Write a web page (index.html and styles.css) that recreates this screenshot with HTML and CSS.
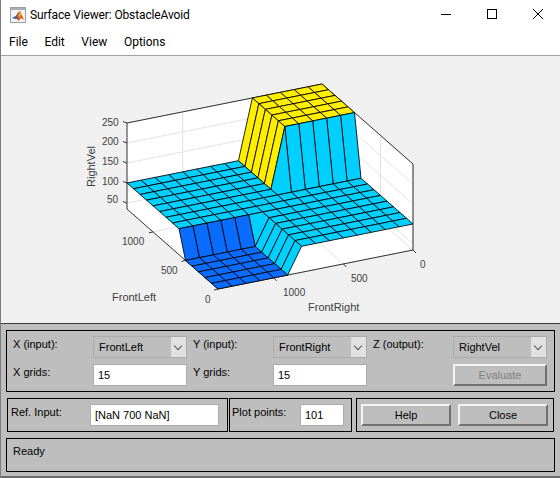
FILE: index.html
```html
<!DOCTYPE html>
<html>
  <head>
    <title>Surface Viewer: ObstacleAvoid</title>
    <meta charset="UTF-8">
    <link rel="stylesheet" href="styles.css">
  </head>
  <body>
    <div class="window">
      <div class="titlebar">
        <svg class="appicon" width="16" height="16" viewBox="0 0 16 16">
          <rect x="0.5" y="0.5" width="15" height="15" fill="#f2f4f6" stroke="#9a9ea4"/>
          <rect x="1" y="1" width="14" height="2" fill="#a8adb4"/>
          <path d="M2 11 L6 9 L8 5.5 L10 4 L14 13 L11 11 L8.5 14 L6 11 Z" fill="#d9541e"/>
          <path d="M2 11 L6 9 L8 6 L7 12 L5 12 Z" fill="#2f6fb5"/>
          <path d="M10 4 L11.5 7.5 L10 11 L8 9 Z" fill="#f0a020"/>
        </svg>
        <span class="title">Surface Viewer: ObstacleAvoid</span>
        <div class="winbtns">
          <svg width="12" height="12" viewBox="0 0 12 12"><path d="M1 6.5H11" stroke="#000" fill="none"/></svg>
          <svg width="12" height="12" viewBox="0 0 12 12"><rect x="1.5" y="1.5" width="9" height="9" stroke="#000" fill="none"/></svg>
          <svg width="12" height="12" viewBox="0 0 12 12"><path d="M1 1L11 11M11 1L1 11" stroke="#000" fill="none"/></svg>
        </div>
      </div>
      <div class="menubar">
        <span>File</span><span>Edit</span><span>View</span><span>Options</span>
      </div>
      <div class="plotarea">
        <svg id="plot" width="559" height="267" viewBox="1 56 559 267">
          <g id="mesh"></g>
          <g class="ticklabels">
            <text x="102" y="126">250</text>
            <text x="102" y="145">200</text>
            <text x="102" y="165">150</text>
            <text x="102" y="185">100</text>
            <text x="107" y="203">50</text>
            <text x="122" y="245">1000</text>
            <text x="161" y="274">500</text>
            <text x="205" y="303">0</text>
            <text x="283" y="296">1000</text>
            <text x="351" y="282">500</text>
            <text x="420" y="268">0</text>
          </g>
          <g class="axislabels">
            <text x="112" y="301">FrontLeft</text>
            <text x="308" y="311">FrontRight</text>
            <text transform="translate(95 187) rotate(-90)">RightVel</text>
          </g>
        </svg>
      </div>
      <div class="controls">
        <div class="panel fields">
          <label>X (input):</label>
          <div class="popup">FrontLeft</div>
          <label>Y (input):</label>
          <div class="popup">FrontRight</div>
          <label>Z (output):</label>
          <div class="popup">RightVel</div>
          <label>X grids:</label>
          <div class="edit">15</div>
          <label>Y grids:</label>
          <div class="edit">15</div>
          <label></label>
          <div class="btn disabled">Evaluate</div>
        </div>
        <div class="row">
          <div class="panel refinput">
            <label>Ref. Input:</label>
            <div class="edit">[NaN 700 NaN]</div>
          </div>
          <div class="panel plotpoints">
            <label>Plot points:</label>
            <div class="edit">101</div>
          </div>
          <div class="panel buttons">
            <div class="btn">Help</div>
            <div class="btn">Close</div>
          </div>
        </div>
        <div class="panel status">Ready</div>
      </div>
    </div>
    <script src="script.js"></script>
  </body>
</html>
```
FILE: styles.css
```css
body {
  margin: 0;
  width: 560px;
  height: 478px;
  overflow: hidden;
  background: #fff;
  font-family: 'Liberation Sans', Arial, sans-serif;
  font-size: 11px;
  color: #000;
}
.window {
  display: flex;
  flex-direction: column;
  height: 478px;
  border-left: 1px solid #7c7c7c;
  box-sizing: border-box;
}
.titlebar {
  display: flex;
  align-items: center;
  height: 30px;
  padding-left: 9px;
  flex: none;
}
.appicon {
  margin-right: 4px;
}
.title {
  font-family: Roboto, sans-serif;
  font-size: 12px;
  letter-spacing: -0.13px;
}
.winbtns {
  display: flex;
  gap: 34px;
  margin-left: auto;
  margin-right: 16px;
  margin-bottom: 2px;
}
.menubar {
  display: flex;
  gap: 16.6px;
  height: 26px;
  padding: 5px 0 0 8px;
  box-sizing: border-box;
  border-bottom: 1px solid #a0a0a0;
  font-family: Roboto, sans-serif;
  font-size: 12px;
  flex: none;
}
.plotarea {
  height: 267px;
  background: #f0f0f0;
  flex: none;
}
#plot {
  display: block;
}
#plot text {
  font-family: 'Liberation Sans', Arial, sans-serif;
  fill: #404040;
}
.ticklabels text {
  font-size: 10px;
}
.axislabels text {
  font-size: 11px;
}
.controls {
  flex: 1;
  display: flex;
  flex-direction: column;
  gap: 6px;
  background: #bebebe;
  border-top: 1px solid #3c3c3c;
  border-bottom: 2px solid #6c6c6c;
  padding: 6px 5px 4px 5px;
}
.panel {
  border: 1px solid #000;
  box-sizing: border-box;
}
.fields {
  display: grid;
  grid-template-columns: 86px 94px 86px 94px 86px 94px;
  grid-auto-rows: 22px;
  row-gap: 6px;
  height: 62px;
  padding-top: 5px;
}
.fields label {
  padding: 2px 0 0 6px;
}
.row {
  display: flex;
  height: 34px;
}
.refinput, .plotpoints {
  display: flex;
  padding-top: 5px;
}
.refinput label, .plotpoints label {
  padding-top: 2px;
}
.refinput {
  width: 221px;
  margin-left: 1px;
  padding-left: 3px;
}
.refinput label {
  width: 79px;
}
.refinput .edit {
  width: 129px;
}
.plotpoints {
  width: 123px;
  margin-left: 1px;
  padding-left: 2px;
}
.plotpoints label {
  width: 68px;
}
.plotpoints .edit {
  width: 44px;
}
.buttons {
  display: flex;
  gap: 7px;
  width: 198px;
  margin-left: 4px;
  padding: 5px 0 0 4px;
}
.buttons .btn {
  width: 90px;
  height: 22px;
}
.status {
  height: 34px;
  padding: 6px 0 0 6px;
}
.popup {
  position: relative;
  height: 22px;
  line-height: 21px;
  padding-left: 5px;
  border: 1px solid #acacac;
  box-sizing: border-box;
}
.popup:after {
  content: "";
  position: absolute;
  right: 0;
  top: 0;
  width: 15px;
  height: 20px;
  background: #e1e1e1;
}
.popup:before {
  content: "";
  position: absolute;
  right: 5px;
  top: 6px;
  width: 5px;
  height: 5px;
  border-right: 1px solid #555;
  border-bottom: 1px solid #555;
  transform: rotate(45deg);
  z-index: 1;
}
.edit {
  height: 22px;
  line-height: 21px;
  padding-left: 4px;
  background: #fff;
  border: 1px solid #acacac;
  box-sizing: border-box;
}
.btn {
  height: 22px;
  line-height: 19px;
  text-align: center;
  background: #bebebe;
  box-sizing: border-box;
  border: 2px solid;
  border-color: #f4f4f4 #707070 #707070 #f4f4f4;
}
.btn.disabled {
  color: #808080;
}
```
FILE: script.js
```js
// draws the surface and its box from the three corner directions on screen
var svg = 'http://www.w3.org/2000/svg';
var mesh = document.getElementById('mesh');
var N = 14;
var BLUE = '#0a6cff', CYAN = '#00d0ff', YELLOW = '#ffee00';

function pt(u, v, h) {
  return [413 - 195 * u - 91 * v, 250 + 39 * u - 80 * v - h];
}
function add(name, attrs) {
  var el = document.createElementNS(svg, name);
  for (var k in attrs) el.setAttribute(k, attrs[k]);
  mesh.appendChild(el);
}
function poly(points, fill, stroke) {
  add('polygon', {
    points: points.map(function (p) { return p.join(','); }).join(' '),
    fill: fill,
    stroke: stroke || 'none',
    'stroke-width': 0.85
  });
}
function line(a, b, color) {
  add('line', { x1: a[0], y1: a[1], x2: b[0], y2: b[1], stroke: color, 'stroke-width': 1 });
}

// heights by grid index, i along FrontRight, j along FrontLeft
function height(i, j) {
  if (i <= 5 && j >= 9) return 86;
  if (i >= 9 && j <= 5) return 0;
  return 26;
}
function color(i, j) {
  var h = height(i, j);
  return h == 86 ? YELLOW : h == 0 ? BLUE : CYAN;
}

// walls and floor
poly([pt(1, 1, 0), pt(1, 1, 86), pt(0, 1, 86), pt(0, 1, 0)], '#fff');
poly([pt(0, 1, 0), pt(0, 1, 86), pt(0, 0, 86), pt(0, 0, 0)], '#fff');
poly([pt(0, 0, 0), pt(1, 0, 0), pt(1, 1, 0), pt(0, 1, 0)], '#fff');

// gridlines
var GRID = '#e2e2e2';
[0, 500, 1000].forEach(function (t) {
  var f = t / 1400;
  line(pt(f, 0, 0), pt(f, 1, 0), GRID);
  line(pt(f, 1, 0), pt(f, 1, 86), GRID);
  line(pt(0, f, 0), pt(1, f, 0), GRID);
  line(pt(0, f, 0), pt(0, f, 86), GRID);
});
[6, 26, 46, 66, 86].forEach(function (h) {
  line(pt(1, 1, h), pt(0, 1, h), GRID);
  line(pt(0, 1, h), pt(0, 0, h), GRID);
});

// back edges of the box
var AXIS = '#333333';
line(pt(1, 1, 0), pt(1, 1, 86), AXIS);
line(pt(1, 1, 86), pt(0, 1, 86), AXIS);
line(pt(0, 1, 86), pt(0, 0, 86), AXIS);
line(pt(0, 0, 0), pt(0, 0, 86), AXIS);

// front edges and ticks, under the surface
line(pt(1, 1, 0), pt(1, 0, 0), AXIS);
line(pt(1, 0, 0), pt(0, 0, 0), AXIS);
[0, 500, 1000].forEach(function (t) {
  var f = t / 1400, a = pt(f, 0, 0), b = pt(1, f, 0);
  line(a, [a[0] + 3, a[1] + 3], AXIS);
  line(b, [b[0] - 4, b[1] + 1], AXIS);
});
[6, 26, 46, 66, 86].forEach(function (h) {
  var a = pt(1, 1, h);
  line(a, [a[0] - 4, a[1] - 1.5], AXIS);
});

// cells, back to front
for (var i = 0; i < N; i++) {
  for (var j = N - 1; j >= 0; j--) {
    poly([
      pt(i / N, j / N, height(i, j)),
      pt((i + 1) / N, j / N, height(i + 1, j)),
      pt((i + 1) / N, (j + 1) / N, height(i + 1, j + 1)),
      pt(i / N, (j + 1) / N, height(i, j + 1))
    ], color(i, j), '#000');
  }
}
```
